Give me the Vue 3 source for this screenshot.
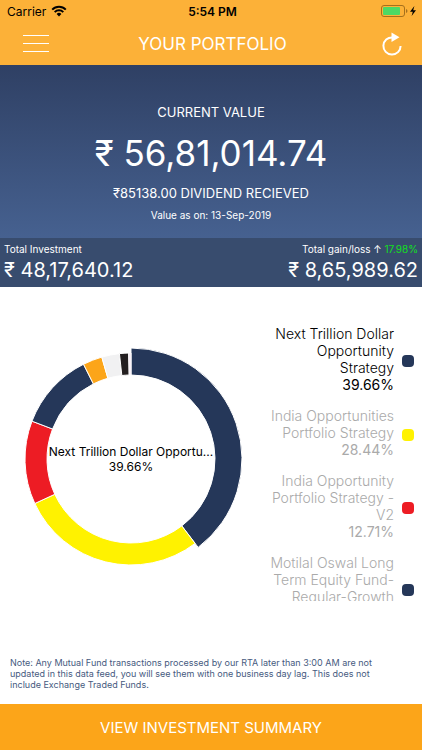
<template>
  <div class="portfolio">
    <header class="top">
      <div class="status">
        <div class="status-left">
          <span>Carrier</span>
          <svg class="wifi" viewBox="0 0 16 12" aria-hidden="true">
            <path d="M1.2 4.6a9.6 9.6 0 0 1 13.6 0" />
            <path d="M3.7 7.1a6.1 6.1 0 0 1 8.6 0" />
            <path class="wifi-dot" d="M5.6 9a3.4 3.4 0 0 1 4.8 0L8 11.5z" />
          </svg>
        </div>
        <span class="time">5:54 PM</span>
        <div class="status-right">
          <svg class="battery" viewBox="0 0 37 12" aria-hidden="true">
            <rect x="0.5" y="0.5" width="23" height="11" rx="2.5" fill="none" stroke="#a5701d" />
            <rect x="2" y="2" width="17" height="8" rx="1" fill="#4cd964" />
            <path d="M25 4v4q1.5-.6 1.5-2T25 4z" fill="#a5701d" />
            <path d="M33.4 1L29 6.7h2.8L30.6 11 35 5.2h-2.8z" fill="#000" />
          </svg>
        </div>
      </div>
      <div class="nav">
        <button class="icon-btn" type="button" aria-label="Menu">
          <svg class="menu" viewBox="0 0 26 17"><path d="M0 .5h26M0 8.5h26M0 16.5h26" /></svg>
        </button>
        <h1>YOUR PORTFOLIO</h1>
        <button class="icon-btn" type="button" aria-label="Refresh">
          <svg class="refresh" viewBox="0 0 20 24">
            <path class="refresh-arc" d="M10.5 5.4A8.6 8.6 0 1 0 18.6 14" />
            <path class="refresh-head" d="M9.5 0.5L17.5 5.2 9.5 9.9z" />
          </svg>
        </button>
      </div>
    </header>

    <section class="current">
      <p class="label">CURRENT VALUE</p>
      <p class="value">₹ 56,81,014.74</p>
      <p class="dividend">₹85138.00 DIVIDEND RECIEVED</p>
      <p class="date">Value as on: 13-Sep-2019</p>
    </section>

    <section class="totals">
      <div>
        <p class="total-label">Total Investment</p>
        <p class="total-value">₹ 48,17,640.12</p>
      </div>
      <div class="right">
        <p class="total-label">Total gain/loss ↑ <span class="gain">17.98%</span></p>
        <p class="total-value">₹ 8,65,989.62</p>
      </div>
    </section>

    <main class="holdings">
      <div class="chart">
        <svg viewBox="0 0 222 222" aria-hidden="true">
          <path v-for="s in slices" :key="s.name" :d="s.d" :fill="s.color" stroke="#fff" />
        </svg>
        <div class="chart-text">
          <span>{{ shortName }}</span>
          <span>{{ funds[selected].percent }}%</span>
        </div>
      </div>
      <ul class="legend">
        <li v-for="(f, i) in legend" :key="f.name" :class="{ active: i === selected }" @click="selected = i">
          <div class="legend-text">
            <span>{{ f.name }}</span>
            <span class="percent">{{ f.percent }}%</span>
          </div>
          <i class="dot" :style="{ background: f.color }"></i>
        </li>
      </ul>
    </main>

    <p class="note">
      Note: Any Mutual Fund transactions processed by our RTA later than 3:00 AM are not
      updated in this data feed, you will see them with one business day lag. This does not
      include Exchange Traded Funds.
    </p>
    <button class="summary" type="button">VIEW INVESTMENT SUMMARY</button>
  </div>
</template>

<script setup>
import { computed, ref } from 'vue'

const funds = [
  { name: 'Next Trillion Dollar Opportunity Strategy', percent: 39.66, color: '#253759' },
  { name: 'India Opportunities Portfolio Strategy', percent: 28.44, color: '#fff200' },
  { name: 'India Opportunity Portfolio Strategy - V2', percent: 12.71, color: '#ed1c24' },
  { name: 'Motilal Oswal Long Term Equity Fund-Regular-Growth', percent: 11.8, color: '#253759' },
  { name: 'Fund 5', percent: 2.95, color: '#fca519' },
  { name: 'Fund 6', percent: 2.7, color: '#f1f1f2' },
  { name: 'Fund 7', percent: 1.4, color: '#231f20' },
  { name: 'Fund 8', percent: 0.34, color: '#f6e6f2' },
]
const legend = funds.slice(0, 4)
const selected = ref(0)

const shortName = computed(() => {
  const name = funds[selected.value].name
  return name.length > 28 ? name.slice(0, 28) + '...' : name
})

const CENTER = 111
const INNER = 84

function point(r, share) {
  const a = (share / 100) * Math.PI * 2
  return `${(CENTER + r * Math.sin(a)).toFixed(2)} ${(CENTER - r * Math.cos(a)).toFixed(2)}`
}

const slices = computed(() => {
  let start = 0
  return funds.map((f, i) => {
    const end = start + f.percent
    // the selected slice stands out of the ring
    const r = i === selected.value ? 111 : 106
    const large = f.percent > 50 ? 1 : 0
    const d = `M${point(r, start)}A${r} ${r} 0 ${large} 1 ${point(r, end)}L${point(INNER, end)}A${INNER} ${INNER} 0 ${large} 0 ${point(INNER, start)}Z`
    start = end
    return { name: f.name, color: f.color, d }
  })
})
</script>

<style>
body { margin: 0; background: #fff; }
</style>

<style scoped>
.portfolio { display: flex; flex-direction: column; min-height: 100vh; font-family: Inter, "Liberation Sans", sans-serif; color: #000; }
p, h1, ul { margin: 0; padding: 0; }
button { border: 0; padding: 0; font-family: inherit; cursor: pointer; }
svg { display: block; }

.top { background: #fcb138; }
.status { display: grid; grid-template-columns: 1fr auto 1fr; align-items: center; height: 22px; padding: 0 4px 0 7px; font-size: 12px; }
.status-left { display: flex; align-items: center; gap: 5px; }
.status-right { display: flex; justify-content: flex-end; }
.time { font-weight: 600; }
.wifi { width: 16px; height: 12px; fill: none; stroke: #000; stroke-width: 2; }
.wifi .wifi-dot { fill: #000; stroke: none; }
.battery { width: 37px; height: 12px; }
.nav { display: grid; grid-template-columns: 1fr auto 1fr; align-items: center; height: 43px; padding: 0 20px 0 23px; }
.nav h1 { font-size: 17px; font-weight: 400; color: #fff; }
.icon-btn { justify-self: start; background: none; }
.icon-btn:last-child { justify-self: end; }
.menu { width: 26px; height: 17px; stroke: #fff; stroke-width: 1; }
.refresh { width: 20px; height: 24px; }
.refresh-arc { fill: none; stroke: #fff; stroke-width: 2; }
.refresh-head { fill: #fff; }

.current { display: flex; flex-direction: column; align-items: center; height: 173px; box-sizing: border-box; padding-top: 37px; color: #fff; background: linear-gradient(#2f4064, #466190); }
.label { font-size: 13px; line-height: 20px; }
.value { font-size: 35px; line-height: 44px; margin-top: 9px; }
.dividend { font-size: 13px; line-height: 20px; margin-top: 8px; }
.date { font-size: 10px; line-height: 20px; margin-top: 2px; }

.totals { display: flex; justify-content: space-between; padding: 3px 4px 4px; color: #fff; background: #384c6e; }
.right { text-align: right; }
.total-label { font-size: 10px; line-height: 16px; }
.total-value { font-size: 20px; line-height: 26px; }
.gain { color: #12e01c; }

.holdings { display: flex; justify-content: space-between; padding: 38px 8px 0 20px; }
.chart { display: grid; place-items: center; width: 222px; margin-top: 23px; align-self: flex-start; }
.chart svg { grid-area: 1 / 1; width: 100%; }
.chart-text { grid-area: 1 / 1; display: flex; flex-direction: column; align-items: center; font-size: 12px; line-height: 15px; white-space: nowrap; }
.legend { display: flex; flex-direction: column; gap: 14px; width: 150px; height: 276px; overflow-y: auto; scrollbar-width: none; list-style: none; }
.legend li { display: flex; align-items: center; justify-content: flex-end; gap: 8px; color: #aaa; cursor: pointer; }
.legend li.active { color: #000; }
.legend-text { display: flex; flex-direction: column; width: 130px; font-size: 14px; font-weight: 300; line-height: 17px; text-align: right; }
.percent { font-weight: 400; }
.dot { width: 12px; height: 12px; margin-top: 4px; border-radius: 4px; }

.note { margin-top: auto; padding: 16px 28px 14px 10px; font-size: 9px; line-height: 11px; color: #465a80; }
.summary { height: 46px; background: #fca519; color: #fff; font-size: 15px; }
</style>
